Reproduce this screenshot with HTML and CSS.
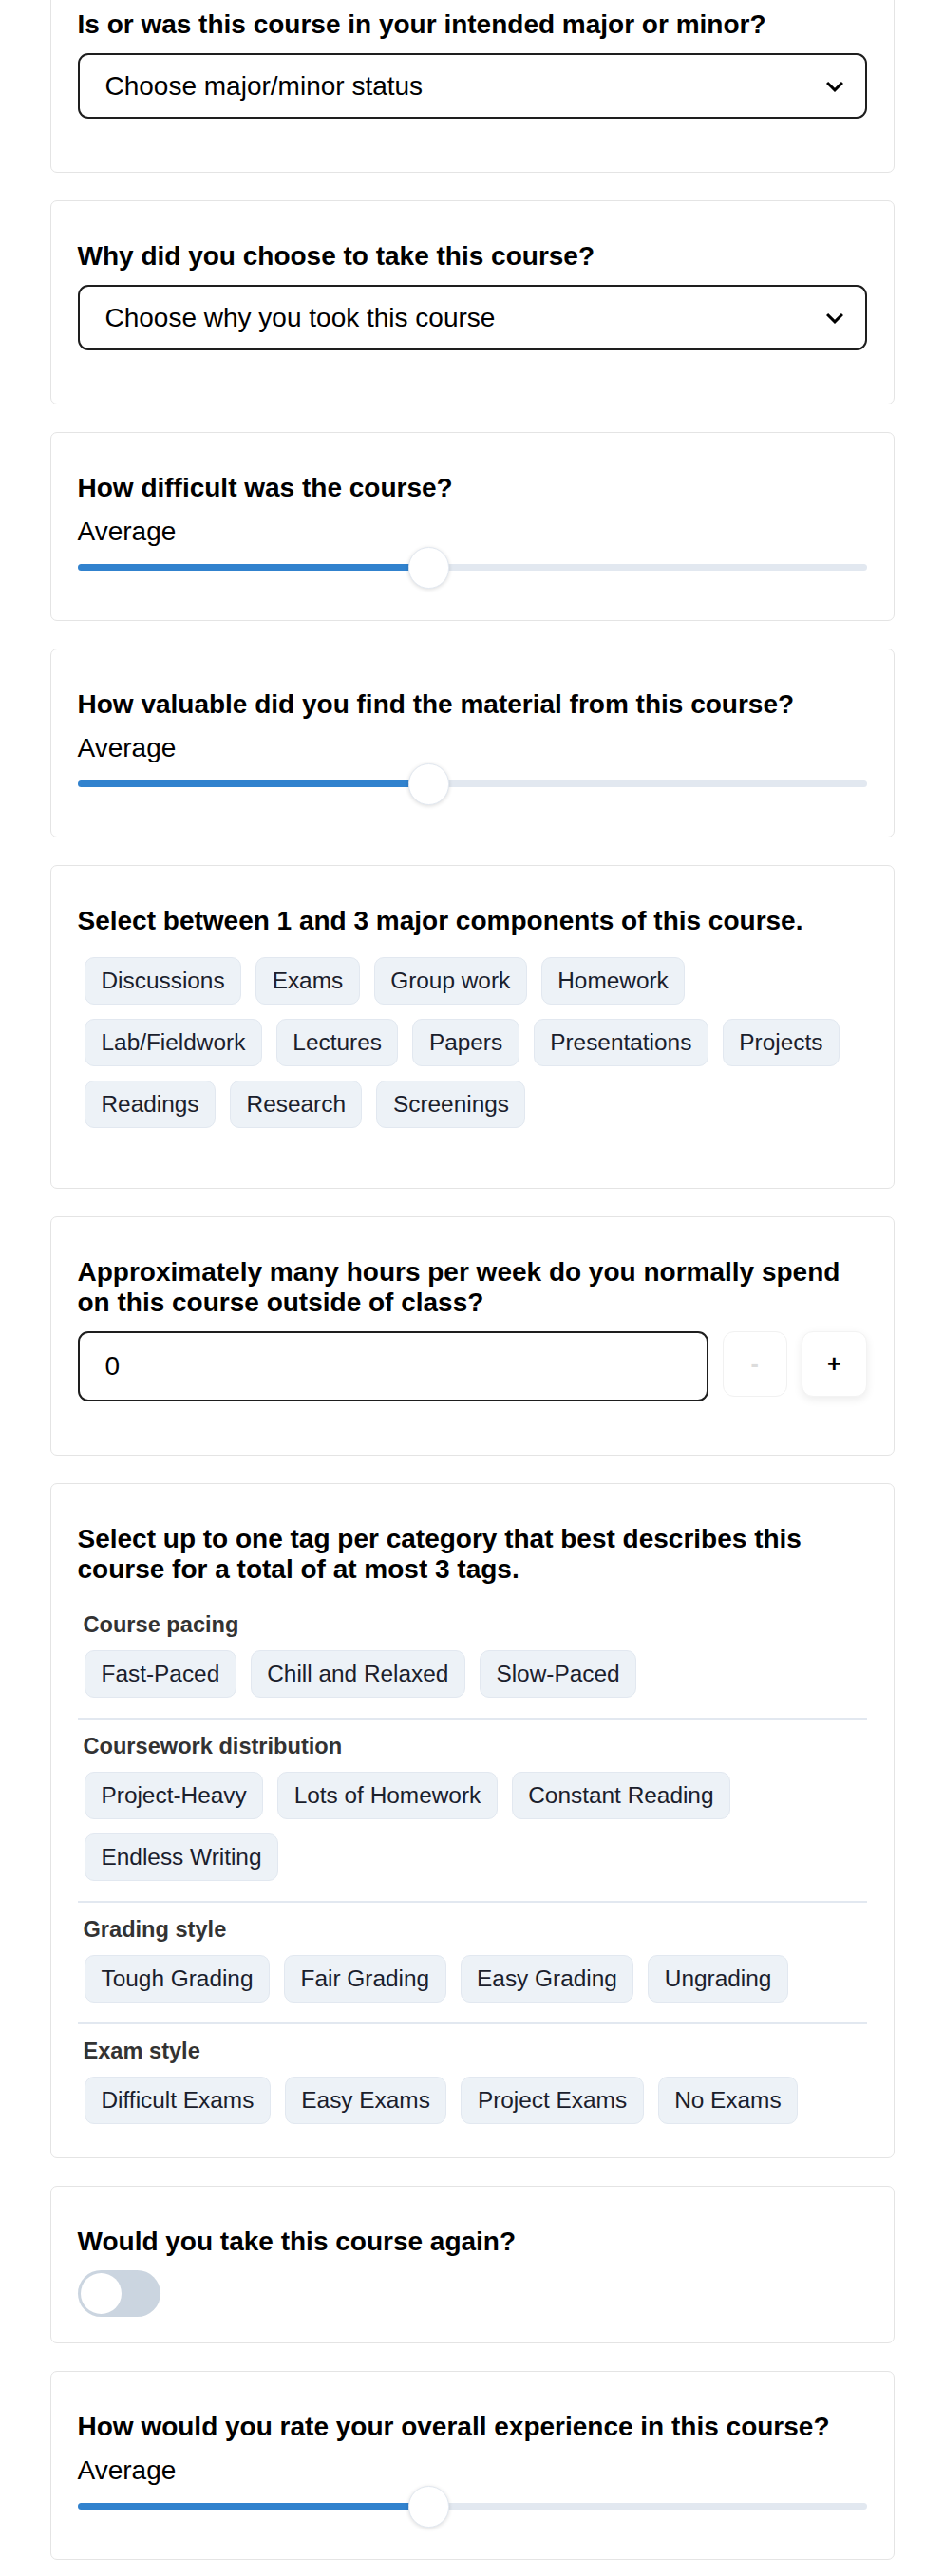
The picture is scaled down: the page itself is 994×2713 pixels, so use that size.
FILE: index.html
```html
<!DOCTYPE html>
<html lang="en">
<head>
<meta charset="utf-8">
<title>Course review</title>
<link rel="stylesheet" href="styles.css">
</head>
<body>
<div class="form">

  <section class="card">
    <h2 class="q">Is or was this course in your intended major or minor?</h2>
    <div class="select">
      <span>Choose major/minor status</span>
      <svg class="chev" viewBox="0 0 24 24" width="36" height="36"><path fill="currentColor" d="M16.59 8.59L12 13.17 7.41 8.59 6 10l6 6 6-6z"/></svg>
    </div>
  </section>

  <section class="card">
    <h2 class="q">Why did you choose to take this course?</h2>
    <div class="select">
      <span>Choose why you took this course</span>
      <svg class="chev" viewBox="0 0 24 24" width="36" height="36"><path fill="currentColor" d="M16.59 8.59L12 13.17 7.41 8.59 6 10l6 6 6-6z"/></svg>
    </div>
  </section>

  <section class="card">
    <h2 class="q">How difficult was the course?</h2>
    <div class="value">Average</div>
    <div class="slider" style="--v: 44.5%">
      <div class="track"><div class="fill"></div></div>
      <div class="thumb"></div>
    </div>
  </section>

  <section class="card">
    <h2 class="q">How valuable did you find the material from this course?</h2>
    <div class="value">Average</div>
    <div class="slider" style="--v: 44.5%">
      <div class="track"><div class="fill"></div></div>
      <div class="thumb"></div>
    </div>
  </section>

  <section class="card">
    <h2 class="q">Select between 1 and 3 major components of this course.</h2>
    <div class="chips spaced">
      <span class="chip">Discussions</span>
      <span class="chip">Exams</span>
      <span class="chip">Group work</span>
      <span class="chip">Homework</span>
      <span class="chip">Lab/Fieldwork</span>
      <span class="chip">Lectures</span>
      <span class="chip">Papers</span>
      <span class="chip">Presentations</span>
      <span class="chip">Projects</span>
      <span class="chip">Readings</span>
      <span class="chip">Research</span>
      <span class="chip">Screenings</span>
    </div>
  </section>

  <section class="card">
    <h2 class="q">Approximately many hours per week do you normally spend on this course outside of class?</h2>
    <div class="num-row">
      <input class="num-input" type="text" value="0" aria-label="Hours per week">
      <button class="step minus" type="button">-</button>
      <button class="step plus" type="button">+</button>
    </div>
  </section>

  <section class="card">
    <h2 class="q">Select up to one tag per category that best describes this course for a total of at most 3 tags.</h2>
    <div class="tag-group">
      <div class="group-label">Course pacing</div>
      <div class="chips">
        <span class="chip">Fast-Paced</span>
        <span class="chip">Chill and Relaxed</span>
        <span class="chip">Slow-Paced</span>
      </div>
    </div>
    <div class="tag-group">
      <div class="group-label">Coursework distribution</div>
      <div class="chips">
        <span class="chip">Project-Heavy</span>
        <span class="chip">Lots of Homework</span>
        <span class="chip">Constant Reading</span>
        <span class="chip">Endless Writing</span>
      </div>
    </div>
    <div class="tag-group">
      <div class="group-label">Grading style</div>
      <div class="chips">
        <span class="chip">Tough Grading</span>
        <span class="chip">Fair Grading</span>
        <span class="chip">Easy Grading</span>
        <span class="chip">Ungrading</span>
      </div>
    </div>
    <div class="tag-group">
      <div class="group-label">Exam style</div>
      <div class="chips">
        <span class="chip">Difficult Exams</span>
        <span class="chip">Easy Exams</span>
        <span class="chip">Project Exams</span>
        <span class="chip">No Exams</span>
      </div>
    </div>
  </section>

  <section class="card">
    <h2 class="q">Would you take this course again?</h2>
    <div class="toggle"><div class="knob"></div></div>
  </section>

  <section class="card">
    <h2 class="q">How would you rate your overall experience in this course?</h2>
    <div class="value">Average</div>
    <div class="slider" style="--v: 44.5%">
      <div class="track"><div class="fill"></div></div>
      <div class="thumb"></div>
    </div>
  </section>

</div>
</body>
</html>
```

FILE: styles.css
```css
* {
  box-sizing: border-box;
}

html, body {
  margin: 0;
  padding: 0;
  background: #ffffff;
}

body {
  font-family: "Liberation Sans", Arial, Helvetica, sans-serif;
  color: #000000;
}

.form {
  width: 889px;
  margin: -33px auto 0;
  padding-bottom: 18px;
  display: flex;
  flex-direction: column;
  gap: 29px;
}

.card {
  background: #ffffff;
  border: 1px solid #e4e4e4;
  border-radius: 7px;
  padding: 42px 28px 28px;
}

.q {
  margin: 0 0 14px;
  font-size: 28px;
  line-height: 32px;
  font-weight: 700;
  color: #000000;
}

/* select */
.select {
  height: 69px;
  margin-bottom: 28px;
  border: 2px solid #1e1e1e;
  border-radius: 11px;
  display: flex;
  align-items: center;
  justify-content: space-between;
  padding: 0 14px 0 27px;
  font-size: 28px;
  color: #000000;
}

.chev {
  display: block;
  color: #000000;
}

/* slider */
.value {
  font-size: 28px;
  line-height: 32px;
  color: #000000;
}

.slider {
  position: relative;
  height: 43px;
  margin-bottom: 6px;
  display: flex;
  align-items: center;
}

.track {
  width: 100%;
  height: 7px;
  border-radius: 4px;
  background: #e2e8f0;
  overflow: hidden;
}

.fill {
  width: var(--v);
  height: 100%;
  background: #3182ce;
}

.thumb {
  position: absolute;
  top: 0;
  left: calc(var(--v) - 21.75px);
  width: 43.5px;
  height: 43.5px;
  border-radius: 50%;
  background: #ffffff;
  border: 1px solid #e2e8f0;
  box-shadow: 0 1px 4px rgba(0, 0, 0, 0.14);
}

/* chips */
.chips {
  display: flex;
  flex-wrap: wrap;
}

.chips.spaced {
  margin-bottom: 28px;
}

.chip {
  display: inline-block;
  height: 50px;
  margin: 7.5px;
  padding: 0 16.5px;
  border: 1px solid #e2e8f0;
  border-radius: 10px;
  background: #edf2f7;
  color: #1a202c;
  font-size: 24.4px;
  line-height: 48px;
  white-space: nowrap;
}

/* tag groups */
.tag-group {
  padding-top: 14px;
}

.tag-group + .tag-group {
  margin-top: 14px;
  border-top: 2px solid #e2e8f0;
}

.group-label {
  margin: 0 0 5px 6px;
  font-size: 23.6px;
  line-height: 28px;
  font-weight: 700;
  color: #333333;
}

/* number input */
.num-row {
  display: flex;
  align-items: flex-start;
  gap: 15px;
  margin-bottom: 28px;
}

.num-input {
  flex: 1;
  min-width: 0;
  height: 74px;
  border: 2px solid #1e1e1e;
  border-radius: 11px;
  padding: 0 27px;
  font-family: "Liberation Sans", Arial, Helvetica, sans-serif;
  font-size: 28px;
  color: #000000;
  background: #ffffff;
  outline: none;
}

.step {
  width: 68.5px;
  height: 68.5px;
  border-radius: 12px;
  background: #ffffff;
  font-family: "Liberation Sans", Arial, Helvetica, sans-serif;
  font-size: 25px;
  font-weight: 700;
  line-height: 1;
  padding: 0;
  cursor: pointer;
}

.step.minus {
  border: 1px solid #f1f1f1;
  color: #dcdcdc;
}

.step.plus {
  border: 1px solid #f3f3f3;
  color: #000000;
  box-shadow: 0 3px 10px rgba(0, 0, 0, 0.08);
}

/* toggle */
.toggle {
  width: 87px;
  height: 49px;
  padding: 3px;
  border-radius: 25px;
  background: #cbd5e0;
  margin-bottom: -1px;
}

.knob {
  width: 43px;
  height: 43px;
  border-radius: 50%;
  background: #ffffff;
}
```
